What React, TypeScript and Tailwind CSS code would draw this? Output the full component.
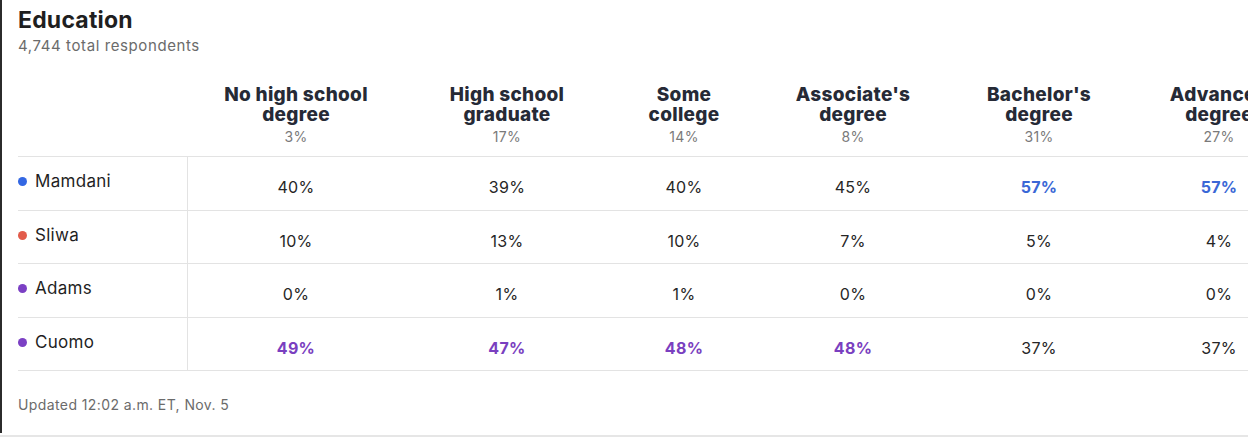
const columns = [
  {lines: ["No high school", "degree"], share: "3%"},
  {lines: ["High school", "graduate"], share: "17%"},
  {lines: ["Some", "college"], share: "14%"},
  {lines: ["Associate's", "degree"], share: "8%"},
  {lines: ["Bachelor's", "degree"], share: "31%"},
  {lines: ["Advanced", "degree"], share: "27%"}
];

type Row = {
  name: string;
  dot: string;
  lead: string;
  values: {v: string; lead?: boolean}[];
};

const rows: Row[] = [
  {
    name: "Mamdani",
    dot: "bg-[#3367e3]",
    lead: "text-[#3a67d6]",
    values: [{v: "40%"}, {v: "39%"}, {v: "40%"}, {v: "45%"}, {v: "57%", lead: true}, {v: "57%", lead: true}]
  },
  {
    name: "Sliwa",
    dot: "bg-[#e25c4b]",
    lead: "text-[#e25c4b]",
    values: [{v: "10%"}, {v: "13%"}, {v: "10%"}, {v: "7%"}, {v: "5%"}, {v: "4%"}]
  },
  {
    name: "Adams",
    dot: "bg-[#7b40c4]",
    lead: "text-[#7a3fc0]",
    values: [{v: "0%"}, {v: "1%"}, {v: "1%"}, {v: "0%"}, {v: "0%"}, {v: "0%"}]
  },
  {
    name: "Cuomo",
    dot: "bg-[#7b40c4]",
    lead: "text-[#7a3fc0]",
    values: [{v: "49%", lead: true}, {v: "47%", lead: true}, {v: "48%", lead: true}, {v: "48%", lead: true}, {v: "37%"}, {v: "37%"}]
  }
];

export default function App() {
  return (
    <div className="w-[1248px] h-[439px] overflow-hidden bg-white font-['Inter','Liberation_Sans',sans-serif]">
      <div className="h-[433px] border-l-2 border-[#2b2b2b] pl-4">
        <h2 className="pt-[6px] text-[23px] font-bold leading-7 tracking-[0.2px] text-[#1f1f1f]">Education</h2>
        <p className="pt-[2px] text-[15px] leading-5 tracking-[0.6px] text-[#6b6b6b]">4,744 total respondents</p>

        <div className="mt-[25px] grid grid-cols-[170px_216px_206px_148px_190px_182px_178px] w-[1290px]">
          <div className="h-[76px] border-b border-[#e3e3e3]" />
          {columns.map((col) => (
            <div className="h-[76px] border-b border-[#e3e3e3] pt-[4px] text-center" key={col.share + col.lines[0]}>
              {col.lines.map((line) => (
                <p className="text-[19px] font-extrabold leading-5 tracking-[0.3px] text-[#262a36]" key={line}>
                  {line}
                </p>
              ))}
              <p className="mt-[2px] text-[14px] leading-5 tracking-[0.3px] text-[#7a7a7a]">{col.share}</p>
            </div>
          ))}

          {rows.map((row) => (
            <div className="contents" key={row.name}>
              <div className="flex h-[53.5px] items-start gap-2 border-b border-r border-[#e3e3e3] pt-[12px]">
                <span className={`mt-[8px] h-[9px] w-[9px] rounded-full ${row.dot}`} />
                <span className="text-[17px] leading-6 tracking-[0.3px] text-[#1f1f1f]">{row.name}</span>
              </div>
              {row.values.map((cell, i) => (
                <div
                  className={`h-[53.5px] border-b border-[#e3e3e3] pt-[18px] text-center text-[16px] leading-6 tracking-[0.3px] ${
                    cell.lead ? `font-bold ${row.lead}` : "text-[#262626]"
                  }`}
                  key={i}
                >
                  {cell.v}
                </div>
              ))}
            </div>
          ))}
        </div>

        <p className="mt-[24px] text-[14px] leading-5 tracking-[0.4px] text-[#6b6b6b]">Updated 12:02 a.m. ET, Nov. 5</p>
      </div>
      <div className="mt-[2px] border-t-2 border-[#e6e6e6]" />
    </div>
  );
}
